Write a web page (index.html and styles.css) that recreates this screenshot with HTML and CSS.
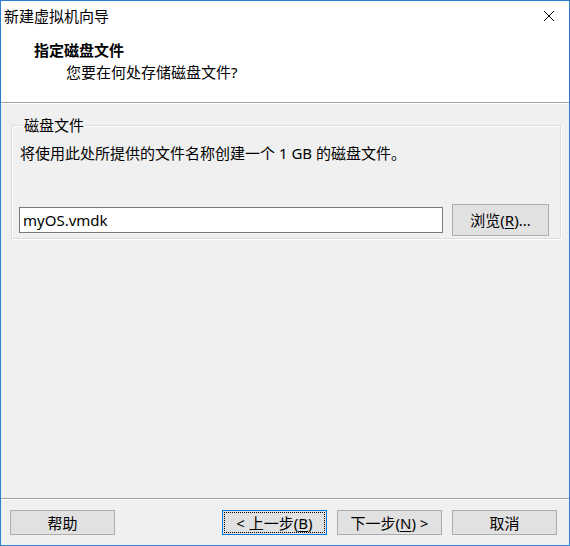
FILE: index.html
```html
<!DOCTYPE html>
<html lang="zh-CN">
<head>
<meta charset="utf-8">
<title>新建虚拟机向导</title>
<link rel="stylesheet" href="styles.css">
</head>
<body>
<div class="window">
  <div class="titlebar">
    <span class="title">新建虚拟机向导</span>
    <span class="close" aria-label="关闭">
      <svg width="12" height="12" viewBox="0 0 12 12"><path d="M1 1 L11 11 M11 1 L1 11" stroke="#000" stroke-width="1" fill="none"/></svg>
    </span>
  </div>
  <div class="header">
    <div class="heading">指定磁盘文件</div>
    <div class="subheading">您要在何处存储磁盘文件?</div>
  </div>
  <div class="content">
    <fieldset class="group">
      <legend class="group-label">磁盘文件</legend>
      <p class="desc">将使用此处所提供的文件名称创建一个 1 GB 的磁盘文件。</p>
      <div class="file-row">
        <input class="file-input" type="text" value="myOS.vmdk">
        <button class="btn browse">浏览(<u>R</u>)...</button>
      </div>
    </fieldset>
  </div>
  <div class="footer">
    <button class="btn">帮助</button>
    <div class="nav">
      <button class="btn default">&lt; 上一步(<u>B</u>)</button>
      <button class="btn">下一步(<u>N</u>) &gt;</button>
      <button class="btn">取消</button>
    </div>
  </div>
</div>
</body>
</html>
```
FILE: styles.css
```css
* { box-sizing: border-box; }
html, body { margin: 0; padding: 0; }
body {
  font-family: "Noto Sans", "Noto Sans CJK SC", sans-serif;
  font-size: 15px;
  color: #000;
  background: #fff;
}
.window {
  width: 570px;
  height: 546px;
  border: 1px solid #2b7fd3;
  display: flex;
  flex-direction: column;
  background: #f0f0f0;
}
.titlebar {
  height: 30px;
  background: #fff;
  display: flex;
  align-items: center;
  justify-content: space-between;
  padding: 0 14px 0 3px;
}
.title { line-height: 20px; }
.close { display: flex; width: 12px; height: 12px; }
.header {
  height: 72px;
  background: #fff;
  border-bottom: 1px solid #a0a0a0;
  padding-top: 9px;
}
.heading {
  font-weight: bold;
  line-height: 20px;
  padding-left: 33px;
  height: 22px;
}
.subheading {
  line-height: 20px;
  padding-left: 65px;
}
.content {
  flex: 1;
  padding: 12px 8px 0 10px;
  box-shadow: inset 0 1px 0 #fff;
}
.group {
  margin: 0;
  padding: 0 11px 2px 7px;
  border: 1px solid #dcdcdc;
  box-shadow: inset 1px 1px 0 #fff, 1px 1px 0 #fff;
}
.group-label {
  padding: 0 1px;
  margin-left: 4px;
  line-height: 20px;
}
.desc {
  margin: 8px 0 0 1px;
  line-height: 20px;
}
.file-row {
  display: flex;
  align-items: center;
  gap: 9px;
  margin-top: 41px;
}
.file-input {
  flex: 1;
  height: 26px;
  border: 1px solid #7a7a7a;
  background: #fff;
  font-family: inherit;
  font-size: 15px;
  padding: 0 3px;
  margin: 0;
  color: #000;
}
.btn {
  font-family: inherit;
  font-size: 15px;
  color: #000;
  background: #e1e1e1;
  border: 1px solid #adadad;
  width: 105px;
  height: 25px;
  padding: 0;
  margin: 0;
  line-height: 20px;
}
.btn u { text-decoration: underline; text-underline-offset: 2px; }
.browse { width: 97px; height: 32px; }
.default {
  border-color: #0078d7;
  outline: 1px dotted #000;
  outline-offset: -3px;
}
.footer {
  border-top: 1px solid #a0a0a0;
  box-shadow: inset 0 1px 0 #fff;
  display: flex;
  align-items: center;
  padding: 11px 12px 10px 9px;
}
.nav {
  margin-left: auto;
  display: flex;
  gap: 10px;
}
```
